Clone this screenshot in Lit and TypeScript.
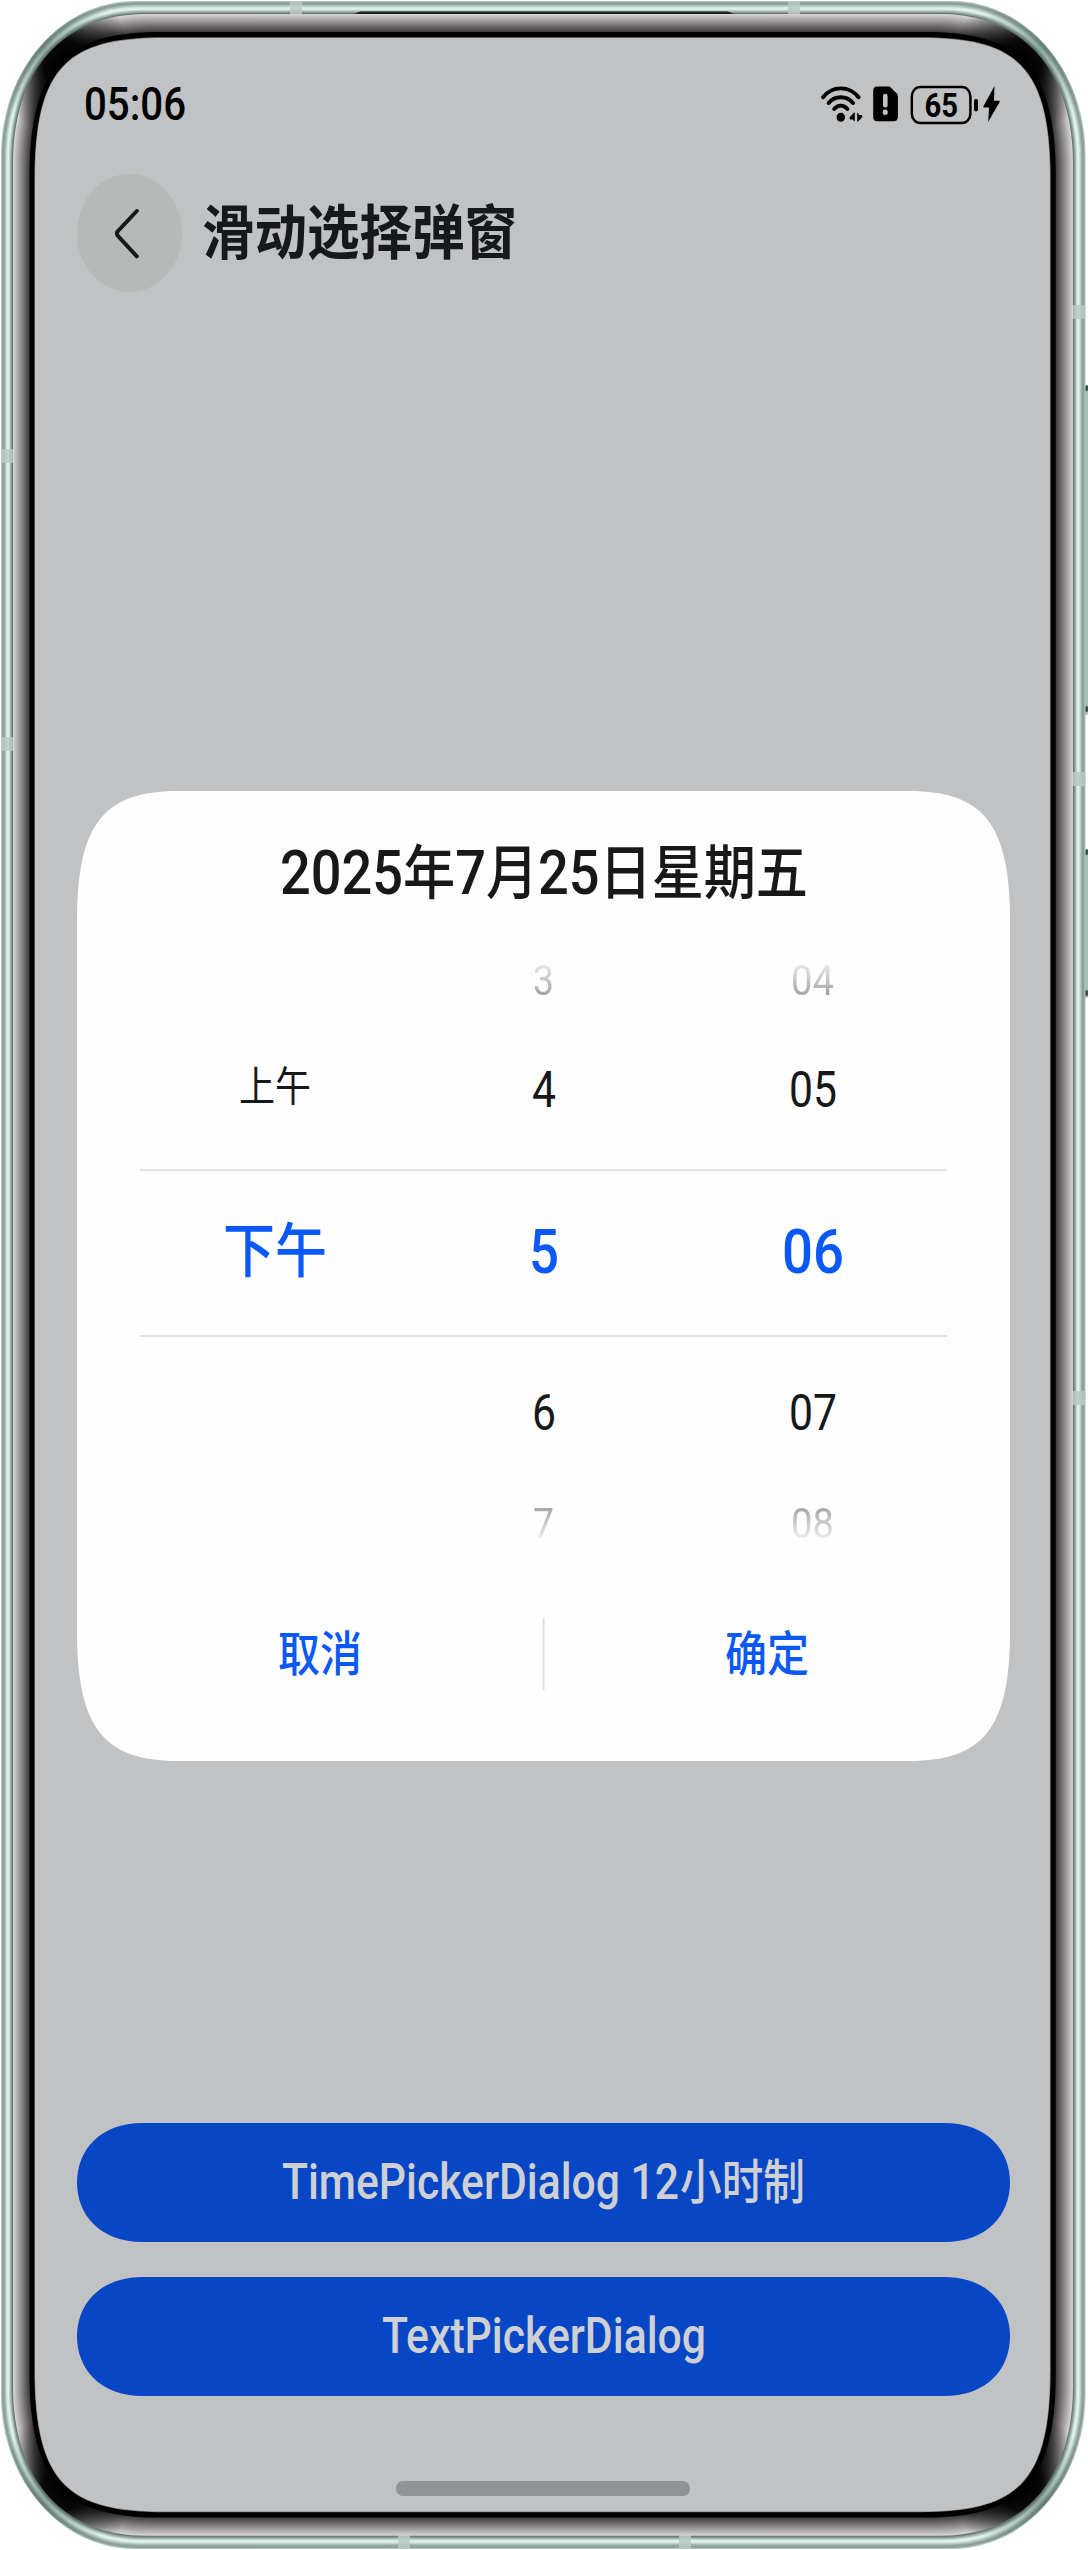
import { LitElement, html, svg, css } from "lit";
import { customElement } from "lit/decorators.js";

/* All screen text is drawn slightly taller than wide. */
const STRETCH = 1.135;

interface Run {
  t: string;
  size: number;
  cls?: string;
}

/* One line of text fitted to a width, with its baseline at a given offset. */
const label = (runs: Run[], w: number, h: number, base: number, cls = "", k = STRETCH) => html`
  <svg class="label ${cls}" width=${w} height=${h} viewBox="0 0 ${w} ${h}">
    <text
      x="0"
      y=${base / k}
      transform="scale(1 ${k})"
      textLength=${w}
      lengthAdjust="spacingAndGlyphs"
      xml:space="preserve"
    >${runs.map((r) => svg`<tspan class=${r.cls ?? "cjk"} font-size=${r.size}>${r.t}</tspan>`)}</text>
  </svg>
`;

const cjk = (t: string, size: number): Run => ({ t, size });
const lat = (t: string, size: number): Run => ({ t, size, cls: "lat" });

const lerp = (a: number, b: number, t: number) => a + (b - a) * t;

/* Outline of the phone body at depth d (0 = outer edge, 34 = screen edge). */
function outline(d: number): string {
  const t = d / 34;
  const l = lerp(1, 35, t);
  const r = lerp(1085.5, 1050, t);
  const y0 = lerp(1, 38, t);
  const y1 = lerp(2549, 2511.5, t);
  const ex = lerp(134, 130, t);
  const ey = lerp(154, 142, t);
  const cx = lerp(60, 34, t);
  const cy = lerp(69, 27, t);
  return (
    `M${l} ${y0 + ey}C${l} ${y0 + cy} ${l + cx} ${y0} ${l + ex} ${y0}` +
    `H${r - ex}C${r - cx} ${y0} ${r} ${y0 + cy} ${r} ${y0 + ey}` +
    `V${y1 - ey}C${r} ${y1 - cy} ${r - cx} ${y1} ${r - ex} ${y1}` +
    `H${l + ex}C${l + cx} ${y1} ${l} ${y1 - cy} ${l} ${y1 - ey}Z`
  );
}

const METAL: [number, string][] = [
  [0, "#b4c3be"],
  [1, "#90a69f"],
  [2, "#869c95"],
  [3, "#99b0a9"],
  [4, "#b0c6bf"],
  [5, "#cbdfd9"],
  [6, "#e0f1ed"],
  [7, "#e0f1ed"],
  [8, "#c4d9d3"],
  [9, "#a1b7b0"],
  [10, "#83988f"],
  [11, "#667670"],
];

const BEZEL: [number, string][] = Array.from({ length: 17 }, (_, i) => {
  const v = Math.round(lerp(212, 62, i / 16));
  return [12 + i, `rgb(${v},${v - 3},${v - 1})`];
});

const CORNERS: [number, number][] = [
  [64, 62],
  [1022, 62],
  [64, 2487],
  [1022, 2487],
];

const frame = () => svg`
  <defs>
    <clipPath id="bezel-clip"><path d=${outline(12)} /></clipPath>
    <clipPath id="body-clip"><path d=${outline(0)} /></clipPath>
    <radialGradient id="shade">
      <stop offset="0" stop-color="#000" />
      <stop offset=".3" stop-color="#000" stop-opacity=".95" />
      <stop offset=".6" stop-color="#000" stop-opacity=".55" />
      <stop offset="1" stop-color="#000" stop-opacity="0" />
    </radialGradient>
    <radialGradient id="tint">
      <stop offset="0" stop-color="#3c5a52" stop-opacity=".5" />
      <stop offset="1" stop-color="#3c5a52" stop-opacity="0" />
    </radialGradient>
  </defs>
  <g fill="#a9bcb6">
    <rect x="1083" y="386" width="5" height="329" rx="2" />
    <rect x="1083" y="850" width="5" height="148" rx="2" />
  </g>
  <g fill="#3d4a46">
    <rect x="1085" y="385" width="3" height="6" rx="1.5" />
    <rect x="1085" y="706" width="3" height="6" rx="1.5" />
    <rect x="1085" y="849" width="3" height="6" rx="1.5" />
    <rect x="1085" y="990" width="3" height="6" rx="1.5" />
  </g>
  ${METAL.map(([d, c]) => svg`<path d=${outline(d)} fill=${c} />`)}
  <g clip-path="url(#body-clip)" fill="url(#tint)">
    ${CORNERS.map(([x, y]) => svg`<ellipse cx=${x < 500 ? 42 : 1044} cy=${y < 500 ? 46 : 2504} rx="70" ry="76" />`)}
  </g>
  <g clip-path="url(#body-clip)" fill="#b7cac4" fill-opacity=".85">
    <rect x="290" y="0" width="12" height="16" />
    <rect x="788" y="0" width="12" height="16" />
    <rect x="398" y="2533" width="12" height="17" />
    <rect x="679" y="2533" width="12" height="17" />
    <rect x="0" y="449" width="14" height="14" />
    <rect x="0" y="737" width="14" height="14" />
    <rect x="1072" y="305" width="14" height="14" />
    <rect x="1072" y="772" width="14" height="14" />
    <rect x="1072" y="1391" width="14" height="14" />
  </g>
  <path d="M354 14 L360 11.5 H728 L734 14Z" fill="#1c2221" />
  ${BEZEL.map(([d, c]) => svg`<path d=${outline(d)} fill=${c} />`)}
  <g clip-path="url(#bezel-clip)" fill="url(#shade)">
    ${CORNERS.map(([x, y]) => svg`<ellipse cx=${x} cy=${y} rx="68" ry="76" />`)}
  </g>
  <path d=${outline(28.5)} fill="#000" />
  <path d=${outline(33.4)} fill="#77787a" />
  <path d=${outline(34)} fill="#c1c2c4" />
`;

const COLUMNS: string[][] = [
  ["", "上午", "下午", "", ""],
  ["3", "4", "5", "6", "7"],
  ["04", "05", "06", "07", "08"],
];

const ROWS = ["far-top", "near", "selected", "near-low", "far-bottom"];

@customElement("app-root")
export class AppRoot extends LitElement {
  static styles = css`
    :host {
      display: block;
      width: 1088px;
      height: 2550px;
      background: #fff;
      overflow: hidden;
    }
    .phone {
      display: grid;
      width: 1088px;
      height: 2550px;
    }
    .frame,
    .screen {
      grid-area: 1 / 1;
      display: block;
    }
    .screen {
      box-sizing: border-box;
      display: flex;
      flex-direction: column;
      padding: 38px 38px 38px 35px;
    }
    .label {
      display: block;
      flex: none;
      overflow: visible;
      fill: #17181a;
      font-weight: 400;
    }
    .cjk {
      font-family: "Noto Sans CJK SC", sans-serif;
    }
    .lat {
      font-family: Roboto, "Noto Sans CJK SC", sans-serif;
    }
    .medium {
      font-weight: 500;
    }
    .bold {
      font-weight: 700;
    }
    .ink {
      fill: #000;
    }
    .blue {
      fill: #0a59f7;
      font-weight: 500;
    }
    .pale {
      fill: #ced0d3;
      font-weight: 500;
    }
    .status {
      display: flex;
      justify-content: space-between;
      align-items: flex-start;
      height: 136px;
      padding: 42px 47px 0 49px;
      box-sizing: border-box;
    }
    .titlebar {
      display: flex;
      align-items: center;
      gap: 20px;
      height: 118px;
      padding-left: 42px;
    }
    .back {
      display: block;
    }
    .card {
      width: 933px;
      height: 970px;
      margin: 499px 0 0 42px;
      background: #fefefe;
      clip-path: path(
        "M0 130C0 34 26 0 101 0H832C907 0 933 34 933 130V840C933 936 907 970 832 970H101C26 970 0 936 0 840Z"
      );
      display: flex;
      flex-direction: column;
      align-items: center;
      box-sizing: border-box;
      padding-top: 54px;
      flex: none;
    }
    .picker {
      width: 807px;
      margin-top: 36px;
      display: grid;
      grid-template-rows: 94px 134px 168px 133px 94px;
    }
    .row {
      display: grid;
      grid-template-columns: repeat(3, 1fr);
      justify-items: center;
      align-items: start;
      box-sizing: border-box;
    }
    .far-top {
      padding-top: 22px;
    }
    .near {
      padding-top: 23px;
    }
    .selected {
      border-top: 2px solid #e2e3e3;
      border-bottom: 2px solid #e2e3e3;
      padding-top: 42px;
    }
    .near-low {
      padding-top: 44px;
    }
    .far-bottom {
      padding-top: 34px;
    }
    .fade-top {
      mask-image: linear-gradient(to bottom, rgba(0, 0, 0, 0.08), rgba(0, 0, 0, 0.4));
    }
    .fade-bottom {
      mask-image: linear-gradient(to bottom, rgba(0, 0, 0, 0.42), rgba(0, 0, 0, 0.08));
    }
    .actions {
      width: 893px;
      display: flex;
      margin-top: 54px;
      height: 72px;
    }
    .action {
      flex: 1;
      display: flex;
      justify-content: center;
      align-items: flex-start;
      padding-top: 8px;
    }
    .divider {
      width: 2px;
      margin: 0 -1px;
      background: #dedfdf;
      transform: translateX(-0.5px);
    }
    .buttons {
      display: flex;
      flex-direction: column;
      gap: 35px;
      margin: 362px 0 0 42px;
    }
    .button {
      width: 933px;
      height: 119px;
      background: #0747c6;
      clip-path: path(
        "M0 59.5C0 28 22 0 66 0H867C911 0 933 28 933 59.5C933 91 911 119 867 119H66C22 119 0 91 0 59.5Z"
      );
      display: flex;
      justify-content: center;
      align-items: flex-start;
      gap: 1px;
      box-sizing: border-box;
      padding-top: 30px;
    }
    .home {
      width: 294px;
      height: 15px;
      border-radius: 7px;
      background: #929395;
      margin: 85px auto 0 361px;
    }
  `;

  private status() {
    return html`
      <div class="status">
        ${label([lat("05:06", 41.5)], 102, 50, 39.5, "ink medium")}
        <svg width="184" height="44" viewBox="820 80 184 44" overflow="visible">
          <g fill="none" stroke="#000" stroke-width="3.9" stroke-linecap="round">
            <path d="M824 97.3Q831 88.4 841.8 88.4T859.6 97.3" />
            <path d="M829.6 103Q834.5 97.2 841.8 97.2T854 103" />
            <path d="M835.2 108.9Q838 105.6 841.8 105.6T848.4 108.9" />
          </g>
          <ellipse cx="841.8" cy="117.2" rx="4.2" ry="4.5" />
          <path d="M850.4 117.6L855 112.6Q855.8 112 855.8 113V120.6Q855.8 121.6 855 121.2L854 119.5H851Z" />
          <path d="M863.4 117L859 121.4Q858.2 122 858.2 121V113.6Q858.2 112.4 859 112.8L860 115H863Z" />
          <path
            d="M878 86.5H889.5Q891 86.5 892 87.7L898 93.8Q898.9 95 898.9 96.5V116.7Q898.9 121.2 894.6 121.2H878.4Q874.2 121.2 874.2 116.7V91Q874.2 86.5 878 86.5Z"
          />
          <rect x="884" y="93.7" width="4.6" height="13.8" rx="2.3" fill="#c1c2c4" />
          <ellipse cx="886.2" cy="112.2" rx="2.5" ry="2.7" fill="#c1c2c4" />
          <rect x="912.8" y="87" width="58.6" height="36" rx="8.5" ry="9.5" fill="none" stroke="#000" stroke-width="2.5" />
          <rect x="975" y="99" width="4" height="12.4" rx="1.8" />
          <path d="M995.5 86L984.4 106.2Q984 107.4 985 107.4H990L989.3 121.8L1000.6 102Q1001 100.8 1000 100.8H995Z" />
          <text class="lat" x="925.4" y="103" font-size="30" font-weight="700" textLength="33.6" lengthAdjust="spacingAndGlyphs" transform="scale(1 1.135)">65</text>
        </svg>
      </div>
    `;
  }

  private cell(text: string, row: number) {
    if (!text) return html`<span></span>`;
    const two = text.length === 2;
    const han = /[^0-9]/.test(text);
    if (row === 2) {
      return han
        ? label([cjk(text, 52)], 104, 60, 58.5, "blue")
        : label([lat(text, 54)], two ? 62 : 30, 60, 60, "blue");
    }
    if (row === 1 || row === 3) {
      return han
        ? label([cjk(text, 36)], 72, 50, 43)
        : label([lat(text, 43.5)], two ? 48 : 24, 50, 49.5);
    }
    return row === 0
      ? label([lat(text, 38)], two ? 43 : 21, 33, 32, "fade-top")
      : label([lat(text, 38)], two ? 43 : 21, 34, 33.5, "fade-bottom");
  }

  render() {
    return html`
      <div class="phone">
        <svg class="frame" width="1088" height="2550" viewBox="0 0 1088 2550">${frame()}</svg>
        <main class="screen">
          ${this.status()}
          <header class="titlebar">
            <svg class="back" width="105" height="118" viewBox="0 0 105 118">
              <ellipse cx="52.5" cy="59" rx="52.5" ry="59" fill="#b6b9b7" />
              <path
                d="M59.8 37L40.8 57.2Q39 59.5 40.8 61.8L59.8 82.3"
                fill="none"
                stroke="#17181a"
                stroke-width="4"
                stroke-linecap="round"
              />
            </svg>
            ${label([cjk("滑动选择弹窗", 52)], 315, 60, 50.5, "bold")}
          </header>
          <section class="card">
            ${label(
              [
                lat("2025", 54),
                cjk("年", 52),
                lat("7", 54),
                cjk("月", 52),
                lat("25", 54),
                cjk("日星期五", 52),
              ],
              528,
              60,
              48.5,
              "medium"
            )}
            <div class="picker">
              ${ROWS.map(
                (name, r) => html`<div class="row ${name}">${COLUMNS.map((c) => this.cell(c[r], r))}</div>`
              )}
            </div>
            <div class="actions">
              <div class="action">${label([cjk("取消", 42)], 84, 50, 45, "blue")}</div>
              <div class="divider"></div>
              <div class="action">${label([cjk("确定", 42)], 84, 50, 45, "blue")}</div>
            </div>
          </section>
          <div class="buttons">
            <div class="button">
              ${label([lat("TimePickerDialog 12", 43.5)], 397, 50, 46, "pale")}
              ${label([cjk("小时制", 42)], 125, 50, 46, "pale")}
            </div>
            <div class="button">${label([lat("TextPickerDialog", 43.5)], 324, 50, 46, "pale")}</div>
          </div>
          <div class="home"></div>
        </main>
      </div>
    `;
  }
}
